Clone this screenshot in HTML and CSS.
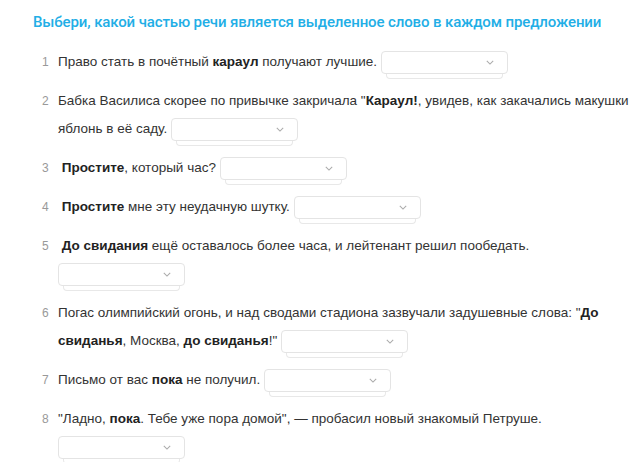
FILE: index.html
```html
<!DOCTYPE html>
<html lang="ru">
<head>
    <meta charset="UTF-8">
    <meta name="viewport" content="width=device-width, initial-scale=1.0">
    <title>Части речи</title>
    <link rel="stylesheet" href="styles.css">
</head>
<body>

    <h1 class="title">Выбери, какой частью речи является выделенное слово в каждом предложении</h1>

    <ol class="tasks">
        <li class="task">
            <span class="num">1</span>
            <div class="text">Право стать в почётный <b>караул</b> получают лучшие. <span class="pick"><svg class="arrow" viewBox="0 0 10 6"><path d="M1 1l4 4 4-4"/></svg></span></div>
        </li>
        <li class="task">
            <span class="num">2</span>
            <div class="text">Бабка Василиса скорее по привычке закричала "<b>Караул!</b>, увидев, как закачались макушки яблонь в её саду. <span class="pick"><svg class="arrow" viewBox="0 0 10 6"><path d="M1 1l4 4 4-4"/></svg></span></div>
        </li>
        <li class="task">
            <span class="num">3</span>
            <div class="text">&nbsp;<b>Простите</b>, который час? <span class="pick"><svg class="arrow" viewBox="0 0 10 6"><path d="M1 1l4 4 4-4"/></svg></span></div>
        </li>
        <li class="task">
            <span class="num">4</span>
            <div class="text">&nbsp;<b>Простите</b> мне эту неудачную шутку. <span class="pick"><svg class="arrow" viewBox="0 0 10 6"><path d="M1 1l4 4 4-4"/></svg></span></div>
        </li>
        <li class="task">
            <span class="num">5</span>
            <div class="text">&nbsp;<b>До свидания</b> ещё оставалось более часа, и лейтенант решил пообедать. <span class="pick"><svg class="arrow" viewBox="0 0 10 6"><path d="M1 1l4 4 4-4"/></svg></span></div>
        </li>
        <li class="task">
            <span class="num">6</span>
            <div class="text">Погас олимпийский огонь, и над сводами стадиона зазвучали задушевные слова: "<b>До свиданья</b>, Москва, <b>до свиданья</b>!" <span class="pick"><svg class="arrow" viewBox="0 0 10 6"><path d="M1 1l4 4 4-4"/></svg></span></div>
        </li>
        <li class="task">
            <span class="num">7</span>
            <div class="text">Письмо от вас <b>пока</b> не получил. <span class="pick"><svg class="arrow" viewBox="0 0 10 6"><path d="M1 1l4 4 4-4"/></svg></span></div>
        </li>
        <li class="task">
            <span class="num">8</span>
            <div class="text">"Ладно, <b>пока</b>. Тебе уже пора домой", — пробасил новый знакомый Петруше. <span class="pick"><svg class="arrow" viewBox="0 0 10 6"><path d="M1 1l4 4 4-4"/></svg></span></div>
        </li>
    </ol>

</body>
</html>
```

FILE: styles.css
```css
body {
    margin: 0;
    background: #fff;
    font-family: 'Liberation Sans', Arial, sans-serif;
    color: #333;
}

.title {
    margin: 0;
    padding: 12px 0 0 33px;
    font-family: 'Roboto', 'Liberation Sans', sans-serif;
    font-size: 15px;
    font-weight: 500;
    line-height: 20px;
    letter-spacing: -0.12px;
    color: #22aee6;
    white-space: nowrap;
}

.tasks {
    list-style: none;
    margin: 16px 0 0 0;
    padding: 0 0 0 40px;
}

.task {
    display: flex;
    margin-bottom: 11px;
}

.num {
    flex: 0 0 18px;
    padding-left: 2px;
    box-sizing: border-box;
    font-size: 12px;
    line-height: 28px;
    color: #999;
}

.text {
    flex: 1;
    font-size: 13.5px;
    line-height: 28px;
}

.text b {
    color: #222;
}

.pick {
    position: relative;
    display: inline-block;
    vertical-align: middle;
    width: 127px;
    height: 23px;
    box-sizing: border-box;
    border: 1px solid #e4e4e4;
    border-radius: 4px;
    background: #fff;
}

.pick::after {
    content: "";
    position: absolute;
    left: 4px;
    right: 4px;
    bottom: -6px;
    height: 10px;
    border: 1px solid #e8e8e8;
    border-top: none;
    border-radius: 0 0 4px 4px;
    background: #fff;
    z-index: -1;
}

.arrow {
    position: absolute;
    right: 13px;
    top: 8px;
    width: 8px;
    height: 5px;
    fill: none;
    stroke: #aaa;
    stroke-width: 1.3;
}
```
